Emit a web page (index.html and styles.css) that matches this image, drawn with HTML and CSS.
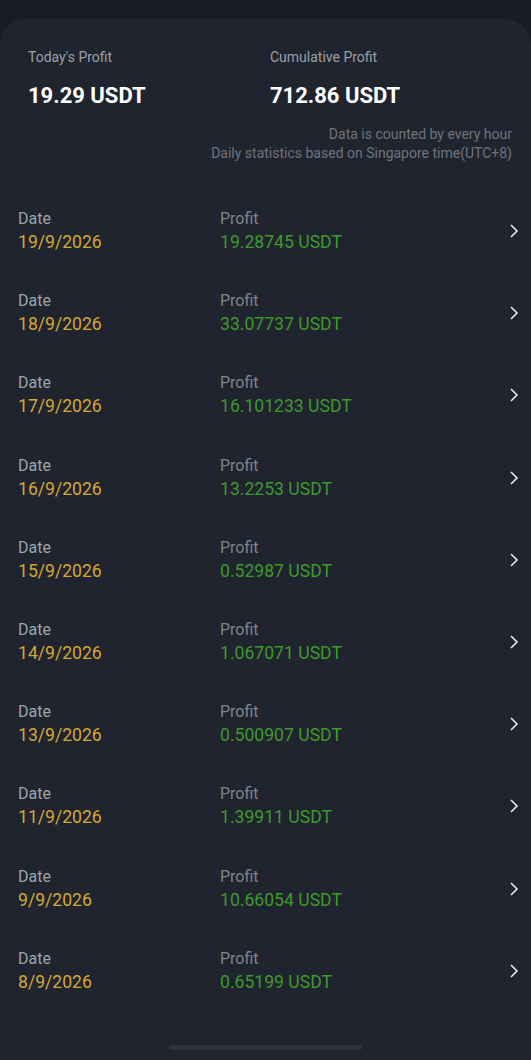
FILE: index.html
```html
<!DOCTYPE html>
<html>
<head>
    <title>Profit Details</title>
    <link rel="stylesheet" href="styles.css">
</head>
<body>
    <div class="card">
        <div class="summary">
            <div class="summary-item">
                <p class="summary-label">Today's Profit</p>
                <p class="summary-value">19.29 USDT</p>
            </div>
            <div class="summary-item">
                <p class="summary-label">Cumulative Profit</p>
                <p class="summary-value">712.86 USDT</p>
            </div>
        </div>
        <div class="note">
            <p>Data is counted by every hour</p>
            <p>Daily statistics based on Singapore time(UTC+8)</p>
        </div>

        <div class="list">
            <div class="row">
                <div class="col-date"><span class="label">Date</span><span class="date">19/9/2026</span></div>
                <div class="col-profit"><span class="label dim">Profit</span><span class="profit">19.28745 USDT</span></div>
                <svg class="chevron" viewBox="0 0 10 16"><path d="M2 2l6 6-6 6"/></svg>
            </div>
            <div class="row">
                <div class="col-date"><span class="label">Date</span><span class="date">18/9/2026</span></div>
                <div class="col-profit"><span class="label dim">Profit</span><span class="profit">33.07737 USDT</span></div>
                <svg class="chevron" viewBox="0 0 10 16"><path d="M2 2l6 6-6 6"/></svg>
            </div>
            <div class="row">
                <div class="col-date"><span class="label">Date</span><span class="date">17/9/2026</span></div>
                <div class="col-profit"><span class="label dim">Profit</span><span class="profit">16.101233 USDT</span></div>
                <svg class="chevron" viewBox="0 0 10 16"><path d="M2 2l6 6-6 6"/></svg>
            </div>
            <div class="row">
                <div class="col-date"><span class="label">Date</span><span class="date">16/9/2026</span></div>
                <div class="col-profit"><span class="label dim">Profit</span><span class="profit">13.2253 USDT</span></div>
                <svg class="chevron" viewBox="0 0 10 16"><path d="M2 2l6 6-6 6"/></svg>
            </div>
            <div class="row">
                <div class="col-date"><span class="label">Date</span><span class="date">15/9/2026</span></div>
                <div class="col-profit"><span class="label dim">Profit</span><span class="profit">0.52987 USDT</span></div>
                <svg class="chevron" viewBox="0 0 10 16"><path d="M2 2l6 6-6 6"/></svg>
            </div>
            <div class="row">
                <div class="col-date"><span class="label">Date</span><span class="date">14/9/2026</span></div>
                <div class="col-profit"><span class="label dim">Profit</span><span class="profit">1.067071 USDT</span></div>
                <svg class="chevron" viewBox="0 0 10 16"><path d="M2 2l6 6-6 6"/></svg>
            </div>
            <div class="row">
                <div class="col-date"><span class="label">Date</span><span class="date">13/9/2026</span></div>
                <div class="col-profit"><span class="label dim">Profit</span><span class="profit">0.500907 USDT</span></div>
                <svg class="chevron" viewBox="0 0 10 16"><path d="M2 2l6 6-6 6"/></svg>
            </div>
            <div class="row">
                <div class="col-date"><span class="label">Date</span><span class="date">11/9/2026</span></div>
                <div class="col-profit"><span class="label dim">Profit</span><span class="profit">1.39911 USDT</span></div>
                <svg class="chevron" viewBox="0 0 10 16"><path d="M2 2l6 6-6 6"/></svg>
            </div>
            <div class="row">
                <div class="col-date"><span class="label">Date</span><span class="date">9/9/2026</span></div>
                <div class="col-profit"><span class="label dim">Profit</span><span class="profit">10.66054 USDT</span></div>
                <svg class="chevron" viewBox="0 0 10 16"><path d="M2 2l6 6-6 6"/></svg>
            </div>
            <div class="row">
                <div class="col-date"><span class="label">Date</span><span class="date">8/9/2026</span></div>
                <div class="col-profit"><span class="label dim">Profit</span><span class="profit">0.65199 USDT</span></div>
                <svg class="chevron" viewBox="0 0 10 16"><path d="M2 2l6 6-6 6"/></svg>
            </div>
        </div>

        <div class="home-bar"></div>
    </div>
</body>
</html>
```

FILE: styles.css
```css
body {
    font-family: Roboto, "Liberation Sans", sans-serif;
    margin: 0;
    padding: 19px 0 0;
    background-color: #181c23;
    color: #fff;
}

p {
    margin: 0;
}

.card {
    background-color: #1f242e;
    border-radius: 26px 26px 0 0;
    min-height: 1041px;
    box-sizing: border-box;
    padding-top: 29px;
    display: flex;
    flex-direction: column;
}

.summary {
    display: flex;
    padding-left: 28px;
}

.summary-item {
    width: 242px;
}

.summary-label {
    font-size: 14px;
    line-height: 19px;
    color: #9aa0a8;
}

.summary-value {
    font-size: 22px;
    font-weight: bold;
    line-height: 26px;
    margin-top: 16px;
    color: #fff;
}

.note {
    text-align: right;
    padding-right: 19px;
    margin-top: 16px;
    font-size: 14px;
    line-height: 19px;
    color: #6f747c;
}

.list {
    margin-top: 44px;
}

.row {
    display: flex;
    align-items: flex-start;
    height: 82.2px;
    padding-left: 18px;
    padding-right: 12px;
    box-sizing: border-box;
}

.col-date {
    width: 202px;
    display: flex;
    flex-direction: column;
}

.col-profit {
    flex: 1;
    display: flex;
    flex-direction: column;
}

.label {
    font-size: 16px;
    line-height: 23px;
    color: #9ea3ad;
}

.label.dim {
    color: #80848b;
}

.date {
    font-size: 17.6px;
    line-height: 25px;
    color: #d4a735;
}

.profit {
    font-size: 17.6px;
    line-height: 25px;
    color: #3e992d;
}

.chevron {
    width: 10px;
    height: 16px;
    margin-top: 16px;
    fill: none;
    stroke: #e6e8eb;
    stroke-width: 1.6;
}

.home-bar {
    width: 193px;
    height: 5px;
    border-radius: 3px;
    background-color: #2e333b;
    margin: auto auto 10px;
}
```
